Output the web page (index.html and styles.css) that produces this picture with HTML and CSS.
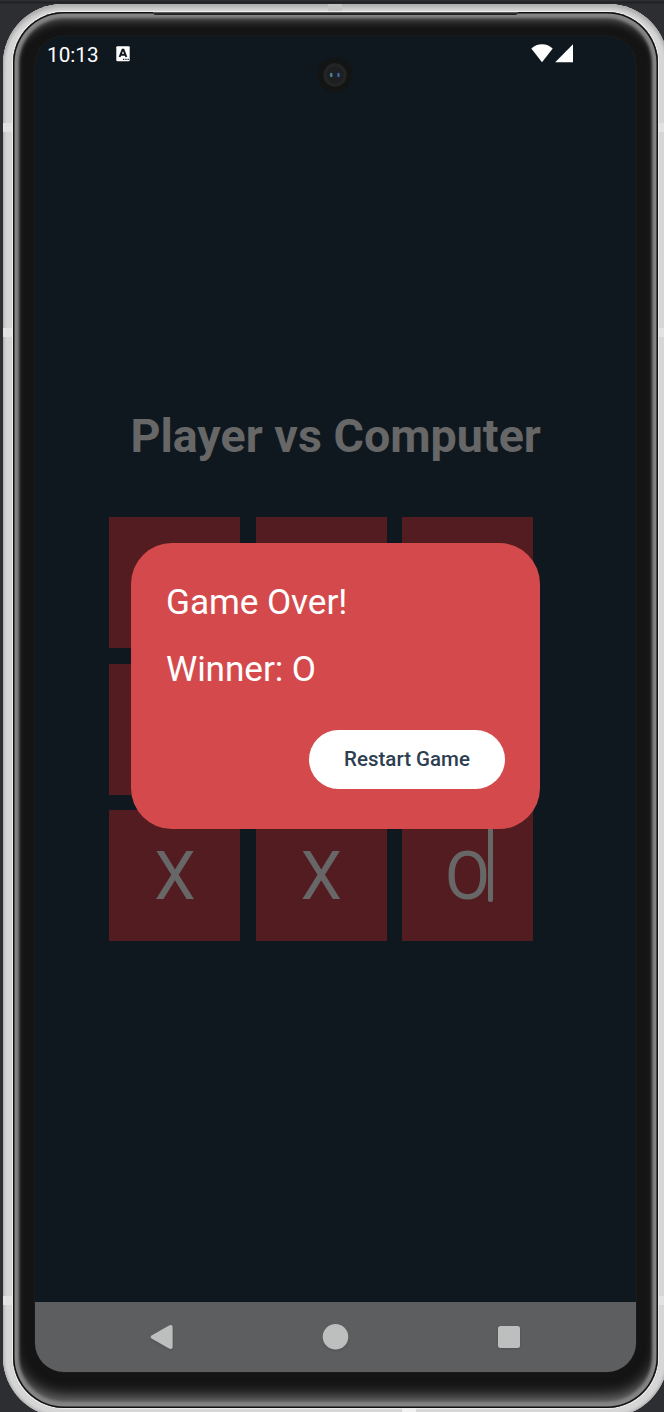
FILE: index.html
```html
<!DOCTYPE html>
<html lang="en">
<head>
<meta charset="utf-8">
<title>Player vs Computer</title>
<link rel="stylesheet" href="styles.css">
</head>
<body>
<div class="phone">
  <span class="seam seam-top"></span>
  <span class="seam seam-bottom"></span>
  <span class="seam seam-side left upper"></span>
  <span class="seam seam-side left middle"></span>
  <span class="seam seam-side left lower"></span>
  <span class="seam seam-side right upper"></span>
  <span class="seam seam-side right middle"></span>
  <span class="seam seam-side right lower"></span>
  <div class="bezel">
    <span class="earpiece"></span>
    <div class="screen">
      <header class="status">
        <span class="clock">10:13</span>
        <svg class="badge" viewBox="0 0 14 16"><rect width="13.4" height="15" x=".3" y=".2" rx="1" fill="#fff"/><path d="M3.6 11 6.5 3.8h1L10.4 11M4.8 8.7h4.4" fill="none" stroke="#10181f" stroke-width="1.9"/><path d="M7 13.4h1.3M9.3 13.4h1.3M11.5 13.4h1.3" stroke="#10181f" stroke-width="1.2"/></svg>
        <svg class="signal" viewBox="0 0 43 19"><path d="M0.3 4.6Q4.8.3 11 .3T21.7 4.6L11 18.2Z" fill="#fff"/><path d="M42 .3V18.2H24.2Z" fill="#fff"/></svg>
      </header>
      <svg class="camera" viewBox="0 0 36 36"><circle cx="18" cy="18" r="17.5" fill="#131414"/><circle cx="18" cy="18" r="11.7" fill="#232424"/><circle cx="18" cy="18" r="8.5" fill="#1d1f20"/><circle cx="18" cy="18" r="4" fill="#1a2029"/><ellipse cx="14.2" cy="18" rx="1.4" ry="2.3" fill="#527f87"/><ellipse cx="21.5" cy="18" rx="1.2" ry="2.3" fill="#4c65a4"/></svg>
      <main class="game">
        <h1 class="title">Player vs Computer</h1>
        <div class="board">
          <div class="cell"></div><div class="cell"></div><div class="cell"></div>
          <div class="cell"></div><div class="cell"></div><div class="cell"></div>
          <div class="cell">X</div><div class="cell">X</div><div class="cell">O<span class="caret"></span></div>
        </div>
      </main>
      <div class="dialog">
        <p class="message">Game Over!</p>
        <p class="message">Winner: O</p>
        <button class="restart">Restart Game</button>
      </div>
      <nav class="navbar">
        <svg class="nav-icon" viewBox="0 0 30 30"><path d="M5 13.2 22 3.4Q25.6 2 25.6 5V25Q25.6 28 22 26.6L5 16.8Q2 15 5 13.2Z"/></svg>
        <svg class="nav-icon" viewBox="0 0 30 30"><circle cx="14.5" cy="14.8" r="12.8"/></svg>
        <svg class="nav-icon" viewBox="0 0 30 30"><rect x="4" y="4" width="22" height="22" rx="2.5"/></svg>
      </nav>
    </div>
  </div>
</div>
</body>
</html>
```

FILE: styles.css
```css
* { box-sizing: border-box; }
body {
  margin: 0;
  height: 1412px;
  padding: 4px 0 0 3px;
  overflow: hidden;
  background: linear-gradient(#2e2f33 0 1px, #202124 2px 3px, #2d2e32 4px);
  font-family: Roboto, sans-serif;
}
.phone {
  position: relative;
  width: 665px;
  height: 1413px;
  padding: 8px 10px 9px;
  border-radius: 60px;
  background: #d1d1d1;
  box-shadow: inset 0 0 3px 1px #aaa, inset 0 5px 4px -1px #b5b5b5, inset 0 0 0 8px #d6d6d6;
}
.bezel {
  position: relative;
  height: 1396px;
  padding: 24px 20px 36px 22px;
  border-radius: 51px;
  background: #141414;
  box-shadow: 0 0 1px .5px #f0f0f0, inset 0 0 0 1.5px #111,
    inset 0 0 3px 6px #858585,
    inset 0 10px 8px -1px #555,
    inset 0 -14px 14px -2px #707070;
}
.seam { position: absolute; background: #c2c2c2; }
.seam-top { left: 325px; top: 0; width: 14px; height: 9px; }
.seam-bottom { left: 399px; top: 1404px; width: 14px; height: 5px; background: #f2f2f2; }
.seam-side { width: 9px; height: 9px; background: #e2e2e2; }
.left { left: 0; }
.right { right: 0; }
.upper { top: 119px; }
.middle { top: 324px; }
.lower { top: 1292px; }
.earpiece {
  position: absolute;
  left: 140px;
  top: 0;
  width: 365px;
  height: 3px;
  border-radius: 0 0 8px 8px;
  background: linear-gradient(#777, #222 55%);
}
.screen {
  position: relative;
  display: flex;
  flex-direction: column;
  width: 601px;
  height: 1336px;
  overflow: hidden;
  border-radius: 29px;
  background: #10181f;
  box-shadow: 0 0 0 .5px #24211e;
}
.status {
  display: flex;
  align-items: flex-start;
  height: 64px;
  padding: 7px 62px 0 12px;
  color: #fff;
}
.clock { width: 68.5px; font-size: 20.7px; line-height: 24px; }
.badge { width: 14px; height: 16px; margin-top: 3px; }
.signal { width: 43px; height: 19px; margin: 1px 0 0 auto; }
.camera { position: absolute; left: 282px; top: 21px; width: 36px; height: 36px; }
.game { flex: 1; padding: 311px 0 0 74.4px; }
.title {
  margin: 0 0 0 21px;
  height: 106.4px;
  font-size: 46.6px;
  line-height: 50px;
  font-weight: 700;
  color: #676767;
  white-space: nowrap;
}
.board {
  display: grid;
  grid-template-columns: repeat(3, 131px);
  grid-auto-rows: 131px;
  gap: 15.3px;
}
.cell {
  position: relative;
  display: flex;
  align-items: center;
  justify-content: center;
  padding-top: 2px;
  background: #521c20;
  color: #676767;
  font-size: 66px;
  line-height: 77px;
}
.caret {
  position: absolute;
  left: 86.5px;
  top: 5px;
  width: 5px;
  height: 87px;
  border-radius: 2px;
  background: #676767;
}
.dialog {
  position: absolute;
  left: 96px;
  top: 507px;
  display: flex;
  flex-direction: column;
  width: 409px;
  height: 286px;
  padding: 35px 35px 40px;
  border-radius: 41px;
  background: #d44a4c;
  color: #fff;
}
.message { margin: 0 0 19px; font-size: 35.2px; line-height: 48px; letter-spacing: -.08px; }
.restart {
  align-self: flex-end;
  width: 196px;
  height: 59px;
  margin-top: 18px;
  padding: 0;
  border: 0;
  border-radius: 30px;
  background: #fff;
  color: #2c3e50;
  font: 500 20.5px/59px Roboto, sans-serif;
  letter-spacing: 0;
}
.navbar {
  display: flex;
  align-items: center;
  justify-content: space-between;
  height: 70px;
  padding: 0 112px;
  background: #5d5e60;
}
.nav-icon { width: 30px; height: 30px; fill: #bdbfbe; filter: drop-shadow(0 1px 1px #4448); }
```
